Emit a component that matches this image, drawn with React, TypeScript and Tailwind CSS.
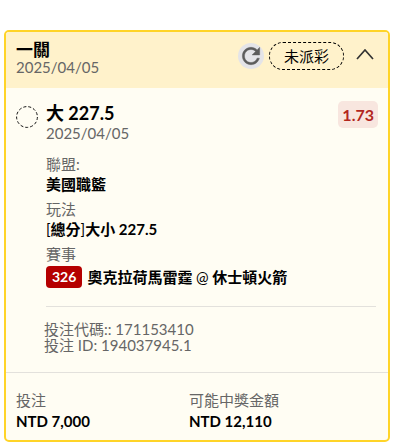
import { useState, ReactNode } from "react";

interface Detail {
  label: string;
  value: ReactNode;
  code?: string;
}

const details: Detail[] = [
  { label: "聯盟:", value: "美國職籃" },
  {
    label: "玩法",
    value: (
      <>
        <span className="font-normal">[</span>總分<span className="font-normal">]</span>大小 227.5
      </>
    ),
  },
  {
    label: "賽事",
    value: (
      <span>
        奧克拉荷馬雷霆 <span className="font-normal">@</span> 休士頓火箭
      </span>
    ),
    code: "326",
  },
];

const totals = [
  { label: "投注", value: "NTD 7,000" },
  { label: "可能中獎金額", value: "NTD 12,110" },
];

function RefreshIcon() {
  return (
    <svg viewBox="0 0 24 24" className="size-[26px]" aria-hidden="true">
      <path
        d="M17.65 6.35C16.2 4.9 14.21 4 12 4c-4.42 0-7.99 3.58-7.99 8s3.57 8 7.99 8c3.73 0 6.84-2.55 7.73-6h-2.08c-.82 2.33-3.04 4-5.65 4-3.31 0-6-2.69-6-6s2.69-6 6-6c1.66 0 3.14.69 4.22 1.78L13 11h7V4l-2.35 2.35z"
        fill="#5c5c5c"
        stroke="#5c5c5c"
        strokeWidth="0.4"
      />
    </svg>
  );
}

export default function App() {
  const [open, setOpen] = useState(true);

  return (
    <main className="min-h-screen bg-white pt-[30px] pr-4 pl-1 font-['Lato','Noto_Sans_CJK_TC',sans-serif] text-[15px] leading-4 text-black">
      <article className="overflow-hidden rounded-[5px] border-2 border-[#ffd428] bg-[#fffdf3]">
        <header className="flex h-14 items-center bg-[#fff2cb] pr-[14px] pb-1 pl-[10px]">
          <div className="flex-1">
            <h1 className="text-[17px] leading-[18px] font-bold">一關</h1>
            <p className="text-[#666]">2025/04/05</p>
          </div>
          <div className="flex items-center pb-1">
            <button type="button" aria-label="重新整理" className="rounded-full bg-[#e4e4e8]">
              <RefreshIcon />
            </button>
            <span className="ml-[5px] flex h-7 items-center rounded-full border border-dashed border-black px-[14px]">
              未派彩
            </span>
            <button type="button" aria-label="展開或收合" aria-expanded={open} onClick={() => setOpen(!open)} className="ml-3">
              <svg viewBox="0 0 18 16" className={open ? "h-4 w-[18px]" : "h-4 w-[18px] rotate-180"} fill="none" aria-hidden="true">
                <path d="M1 11 9 2l8 9" stroke="#333" strokeWidth="1.7" />
              </svg>
            </button>
          </div>
        </header>

        {open && (
          <section className="flex pt-[13px] pr-[10px] pb-[19px] pl-[10px]">
            <div className="mt-[5px] mr-2 shrink-0">
              <svg viewBox="0 0 22 22" className="size-[22px]" fill="none" aria-hidden="true">
                <circle cx="11" cy="11" r="10.4" stroke="#111" strokeDasharray="3 2" />
              </svg>
            </div>
            <div className="flex-1">
              <div className="flex items-start justify-between">
                <div>
                  <h2 className="text-[18px] leading-6 font-bold">大 227.5</h2>
                  <p className="text-[#666]">2025/04/05</p>
                </div>
                <span className="flex h-[27px] items-center rounded-[5px] bg-[#f8e6df] px-1 text-[16px] font-bold text-[#b3261e]">
                  1.73
                </span>
              </div>

              <dl className="mt-[14px] flex flex-col gap-[6px]">
                {details.map((d) => (
                  <div key={d.label}>
                    <dt className="leading-[19px] text-[#666]">{d.label}</dt>
                    <dd className={d.code ? "mt-[2px] flex items-center leading-5 font-bold" : "leading-5 font-bold"}>
                      {d.code && (
                        <span className="mr-[5px] flex h-[22px] items-center rounded bg-[#b50000] px-[6px] text-[14px] text-white">
                          {d.code}
                        </span>
                      )}
                      {d.value}
                    </dd>
                  </div>
                ))}
              </dl>

              <hr className="mt-[18px] mr-[2px] mb-[14px] border-[#e3e1dc]" />
              <p className="-ml-[2px] text-[#666]">
                投注代碼:: 171153410
                <br />
                投注 ID: 194037945.1
              </p>
            </div>
          </section>
        )}

        <footer className="grid grid-cols-[173px_1fr] border-t border-[#e3e1dc] px-[10px] pt-[17px] pb-2">
          {totals.map((t) => (
            <div key={t.label}>
              <p className="leading-[21px] text-[#666]">{t.label}</p>
              <p className="leading-[21px] font-bold">{t.value}</p>
            </div>
          ))}
        </footer>
      </article>
    </main>
  );
}
